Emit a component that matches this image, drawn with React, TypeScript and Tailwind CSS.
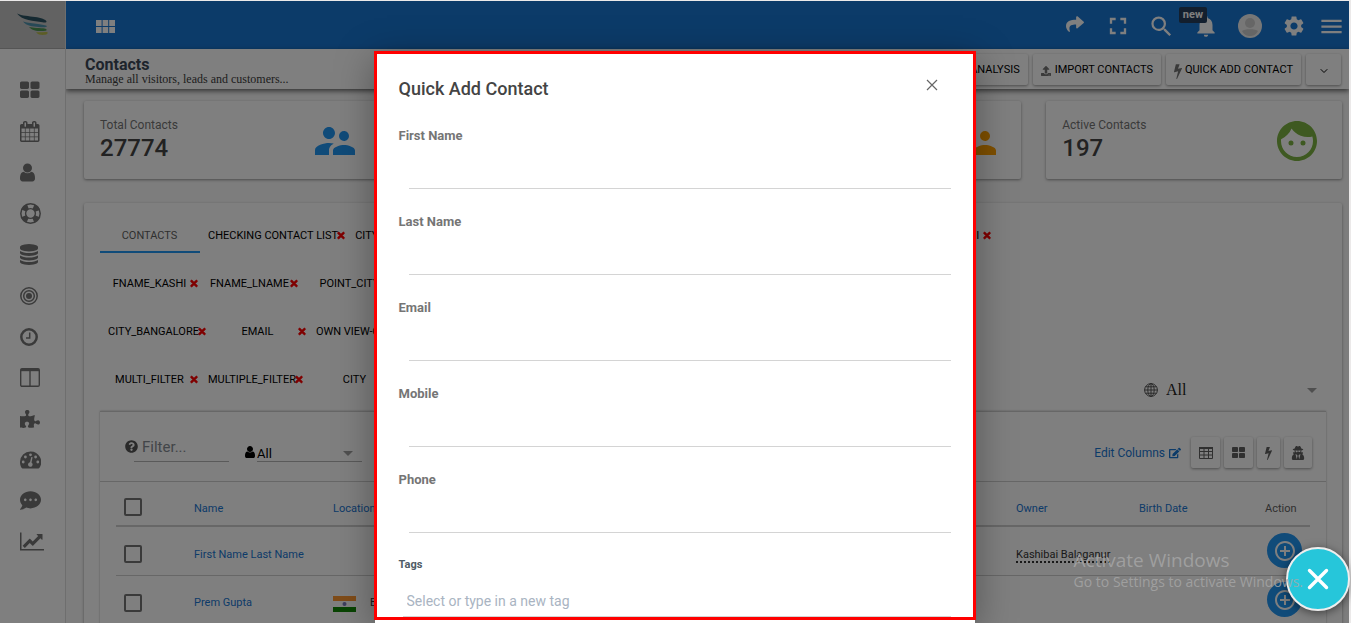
import * as React from 'react'
import {
  FaCommentDots,
  FaEdit,
  FaPuzzlePiece,
  FaQuestionCircle,
  FaShare,
  FaTimes,
  FaUpload,
  FaUserSecret,
} from 'react-icons/fa'
import {
  MdAddCircleOutline,
  MdArrowDropDown,
  MdFace,
  MdFullscreen,
  MdMenu,
  MdNotifications,
  MdSearch,
  MdSettings,
  MdSupervisorAccount,
} from 'react-icons/md'
import { ChevronDown } from 'lucide-react'
import { clsx } from 'clsx'

/* ---------- icons ---------- */

const GLYPHS = {
  thLarge: {
    box: '64 0 1664 1792',
    d: 'M832 1024v384q0 52-38 90t-90 38h-512q-52 0-90-38t-38-90v-384q0-52 38-90t90-38h512q52 0 90 38t38 90zm0-768v384q0 52-38 90t-90 38h-512q-52 0-90-38t-38-90v-384q0-52 38-90t90-38h512q52 0 90 38t38 90zm896 768v384q0 52-38 90t-90 38h-512q-52 0-90-38t-38-90v-384q0-52 38-90t90-38h512q52 0 90 38t38 90zm0-768v384q0 52-38 90t-90 38h-512q-52 0-90-38t-38-90v-384q0-52 38-90t90-38h512q52 0 90 38t38 90z',
  },
  calendar: {
    box: '64 0 1664 1792',
    d: 'M192 1664h288v-288h-288v288zm352 0h320v-288h-320v288zm-352-352h288v-320h-288v320zm352 0h320v-320h-320v320zm-352-384h288v-288h-288v288zm736 736h320v-288h-320v288zm-384-736h320v-288h-320v288zm768 736h288v-288h-288v288zm-384-352h320v-320h-320v320zm-352-864v-288q0-13-9.5-22.5t-22.5-9.5h-64q-13 0-22.5 9.5t-9.5 22.5v288q0 13 9.5 22.5t22.5 9.5h64q13 0 22.5-9.5t9.5-22.5zm736 864h288v-320h-288v320zm-384-384h320v-288h-320v288zm384 0h288v-288h-288v288zm32-480v-288q0-13-9.5-22.5t-22.5-9.5h-64q-13 0-22.5 9.5t-9.5 22.5v288q0 13 9.5 22.5t22.5 9.5h64q13 0 22.5-9.5t9.5-22.5zm384-64v1280q0 52-38 90t-90 38h-1408q-52 0-90-38t-38-90v-1280q0-52 38-90t90-38h128v-96q0-66 47-113t113-47h64q66 0 113 47t47 113v96h384v-96q0-66 47-113t113-47h64q66 0 113 47t47 113v96h128q52 0 90 38t38 90z',
  },
  user: {
    box: '256 0 1280 1792',
    d: 'M1536 1399q0 109-62.5 187t-150.5 78h-854q-88 0-150.5-78t-62.5-187q0-85 8.5-160.5t31.5-152 58.5-131 94-89 134.5-34.500q131 128 313 128t313-128q76 0 134.5 34.5t94 89 58.5 131 31.5 152 8.5 160.5zm-256-887q0 159-112.5 271.5t-271.5 112.5-271.5-112.5-112.5-271.5 112.5-271.5 271.5-112.5 271.5 112.5 112.5 271.5z',
  },
  database: {
    box: '128 0 1536 1792',
    d: 'M896 768q237 0 443-43t325-127v170q0 69-103 128t-280 93.5-385 34.5-385-34.5-280-93.5-103-128v-170q119 84 325 127t443 43zm0 768q237 0 443-43t325-127v170q0 69-103 128t-280 93.5-385 34.5-385-34.5-280-93.5-103-128v-170q119 84 325 127t443 43zm0-384q237 0 443-43t325-127v170q0 69-103 128t-280 93.5-385 34.5-385-34.5-280-93.5-103-128v-170q119 84 325 127t443 43zm0-1152q208 0 385 34.5t280 93.5 103 128v128q0 69-103 128t-280 93.5-385 34.5-385-34.5-280-93.5-103-128v-128q0-69 103-128t280-93.5 385-34.5z',
  },
  chart: {
    box: '0 0 2048 1792',
    d: 'M2048 1536v128h-2048v-1536h128v1408h1920zm-128-1248v435q0 21-19.5 29.5t-35.5-7.5l-121-121-633 633q-10 10-23 10t-23-10l-233-233-416 416-192-192 585-585q10-10 23-10t23 10l233 233 464-464-121-121q-16-16-7.5-35.5t29.5-19.5h435q14 0 23 9.5t9 23.5z',
  },
  bolt: {
    box: '448 0 896 1792',
    d: 'M1333 566q18 20 7 44l-540 1157q-13 25-42 25-4 0-14-2-17-5-25.5-19t-4.5-30l197-808-406 101q-4 1-12 1-18 0-31-11-18-15-13-39l201-825q4-14 16-23t28-9h328q19 0 32 12.5t13 29.5q0 8-5 18l-171 463 396-98q8-2 12-2 19 0 34 15z',
  },
}

const Glyph: React.FC<{ name: keyof typeof GLYPHS; className?: string }> = ({
  name,
  className = 'h-[21px]',
}) => (
  <svg
    viewBox={GLYPHS[name].box}
    fill="currentColor"
    aria-hidden="true"
    className={clsx('w-auto shrink-0', className)}
  >
    <path d={GLYPHS[name].d} />
  </svg>
)

const LifeRing = () => (
  <svg viewBox="0 0 21 21" fill="none" stroke="currentColor" className="size-[21px]">
    <circle cx="10.5" cy="10.5" r="9.7" strokeWidth="1.5" />
    <circle cx="10.5" cy="10.5" r="4.9" strokeWidth="1.4" />
    <circle
      cx="10.5"
      cy="10.5"
      r="7.4"
      strokeWidth="5.4"
      strokeDasharray="5.8 5.824"
      transform="rotate(22.5 10.5 10.5)"
    />
  </svg>
)

const Bullseye = () => (
  <svg viewBox="0 0 18 18" fill="none" stroke="currentColor" strokeWidth="1.5" className="size-[18px]">
    <circle cx="9" cy="9" r="8.2" />
    <circle cx="9" cy="9" r="5.3" />
    <circle cx="9" cy="9" r="3" fill="currentColor" stroke="none" />
  </svg>
)

const Clock = () => (
  <svg viewBox="0 0 18 18" fill="none" stroke="currentColor" className="size-[18px]">
    <circle cx="9" cy="9" r="7.7" strokeWidth="2.5" />
    <path d="M9.7 4.5v5.500H6" strokeWidth="1.5" />
  </svg>
)

const Columns = () => (
  <svg viewBox="0 0 20 19" fill="none" stroke="currentColor" className="h-[19px] w-5">
    <rect x=".7" y=".7" width="18.6" height="17.6" rx="1.3" strokeWidth="1.4" />
    <path d="M1 2h18" strokeWidth="2.4" />
    <path d="M10 2v16" strokeWidth="1.4" />
  </svg>
)

const Gauge = () => (
  <svg viewBox="0 0 21 18" className="h-[18px] w-[21px]">
    <path
      d="M10.5.5A10.5 10.5 0 0 0 0 11c0 2.3.6 4.3 1.7 6 .2.3.5.5.8.5h16c.3 0 .6-.2.8-.5A10.5 10.5 0 0 0 10.5.5z"
      fill="currentColor"
    />
    <g className="fill-white">
      <circle cx="3.2" cy="11" r="1.4" />
      <circle cx="5.4" cy="6" r="1.4" />
      <circle cx="10.5" cy="3.8" r="1.4" />
      <circle cx="15.6" cy="6" r="1.4" />
      <circle cx="17.8" cy="11" r="1.4" />
      <path d="M11.3 5.9l1.3.3-1.1 5.3a2.3 2.3 0 1 1-1.5-.3z" />
    </g>
  </svg>
)

const Globe = () => (
  <svg viewBox="0 0 14 14" fill="none" stroke="currentColor" className="size-[14px]">
    <circle cx="7" cy="7" r="6.4" />
    <ellipse cx="7" cy="7" rx="3.2" ry="6.4" />
    <path d="M7 .5v13M.5 7h13M1.500 3.800h11M1.500 10.200h11" />
  </svg>
)

const TableGrid = () => (
  <svg viewBox="0 0 14 12" fill="none" stroke="currentColor" className="h-3 w-[14px]">
    <path d="M.5 1h13v10.500H.5zM.5 4.500h13M.5 8h13M5 1v10.500M9.500 1v10.500" />
    <path d="M0 1h14" strokeWidth="2" />
  </svg>
)

const ModuleGrid = () => (
  <svg viewBox="0 0 19 13" fill="currentColor" className="h-[13px] w-[19px]">
    <path d="M0 0h5.600v6H0zM6.600 0h5.600v6H6.600zM13.200 0H19v6h-5.800zM0 7h5.600v6H0zM6.600 7h5.600v6H6.600zM13.200 7H19v6h-5.800z" />
  </svg>
)

const Logo = () => (
  <svg viewBox="0 0 32 24" className="h-6 w-8">
    <path d="M0 .5c5 2.500 12 2.500 18 3.500 6 .8 11 2.500 11.500 4.500.2 1-1.500 1.200-4 .8C17 8 5 7.500 0 .5z" fill="#2b5363" />
    <path d="M6 8.500c5 1.800 10 1.500 15 2.500 4 .8 8 1 9 2.300-1 1.400-5 1-8.500.7-6-.6-12-1-15.500-5.500z" fill="#4f93ad" />
    <path d="M12 14c4 1.200 11 .6 16.500 1.700 1.500.4 1.500 1.800 0 2.100-5 .6-13 .6-16.500-3.800z" fill="#4d9652" />
    <path d="M19 19.200c3 .5 8-.4 11.500 0 .8.9-.5 2.300-2.500 2.600-3.500.3-7 0-9-2.600z" fill="#b8bb4c" />
  </svg>
)

/* ---------- data ---------- */

const NAV_ITEMS = [
  { label: 'Dashboard', icon: <Glyph name="thLarge" /> },
  { label: 'Calendar', icon: <Glyph name="calendar" /> },
  { label: 'Contacts', icon: <Glyph name="user" /> },
  { label: 'Support', icon: <LifeRing /> },
  { label: 'Database', icon: <Glyph name="database" /> },
  { label: 'Goals', icon: <Bullseye /> },
  { label: 'History', icon: <Clock /> },
  { label: 'Boards', icon: <Columns /> },
  { label: 'Plugins', icon: <FaPuzzlePiece className="size-5" /> },
  { label: 'Performance', icon: <Gauge /> },
  { label: 'Chat', icon: <FaCommentDots className="size-[21px]" /> },
  { label: 'Reports', icon: <Glyph name="chart" /> },
]

const STATS = [
  { id: 'total', label: 'Total Contacts', value: '27774', icon: MdSupervisorAccount, color: 'text-[#2196f3]' },
  { id: 'customers', icon: MdSupervisorAccount, color: 'text-[#2196f3]' },
  { id: 'leads', icon: MdSupervisorAccount, color: 'text-[#ffa000]' },
  { id: 'active', label: 'Active Contacts', value: '197', icon: MdFace, color: 'text-[#7cb342]' },
]

interface ViewTab {
  label: string
  grow?: boolean
}

const TAB_ROWS: ViewTab[][] = [
  [
    { label: 'CONTACTS' },
    { label: 'CHECKING CONTACT LIST' },
    { label: 'CITY', grow: true },
    { label: 'LNAME_KASHI' },
  ],
  [{ label: 'FNAME_KASHI' }, { label: 'FNAME_LNAME' }, { label: 'POINT_CITY' }],
  [{ label: 'CITY_BANGALORE' }, { label: 'EMAIL' }, { label: 'OWN VIEW-CONTACT' }],
  [{ label: 'MULTI_FILTER' }, { label: 'MULTIPLE_FILTER' }, { label: 'CITY' }],
]

const ROWS = [
  { name: 'First Name Last Name', location: '', owner: 'Kashibai Balaganur' },
  { name: 'Prem Gupta', location: 'Bangalore', owner: '' },
]

const FIELDS = ['First Name', 'Last Name', 'Email', 'Mobile', 'Phone']

const RAISED = 'rounded-xs bg-white shadow-[0_1px_3px_rgba(0,0,0,0.4)]'

/* ---------- sections ---------- */

const Sidebar = () => (
  <aside className="relative z-10 w-[66px] shrink-0 border-r border-[#dcdcdc] bg-white">
    <a
      href="#home"
      aria-label="Home"
      className="flex h-12 items-center border-b border-[#aaaaaa] bg-[#c4c4c4] pl-[17px]"
    >
      <Logo />
    </a>
    <nav className="pt-[21px] text-[#757575]">
      {NAV_ITEMS.map(({ label, icon }) => (
        <a
          key={label}
          href={`#${label.toLowerCase()}`}
          aria-label={label}
          className="flex h-[41px] items-center pl-5"
        >
          {icon}
        </a>
      ))}
    </nav>
  </aside>
)

const TopBar = () => (
  <header className="flex h-12 shrink-0 items-center bg-[#1976d2] pt-0.5 pr-1 text-white">
    <button aria-label="Modules" className="ml-[30px]">
      <ModuleGrid />
    </button>
    <div className="ml-auto flex items-center">
      <button aria-label="Share" className="mr-5 pb-1">
        <FaShare className="size-[18px]" />
      </button>
      <button aria-label="Full screen" className="mr-4">
        <MdFullscreen className="size-7" />
      </button>
      <button aria-label="Search" className="mr-[18px]">
        <MdSearch className="size-[27px]" />
      </button>
      <button aria-label="Notifications" className="relative mr-[19px]">
        <MdNotifications className="size-[26px]" />
        <span className="absolute -top-1.5 right-3 rounded-xs bg-[#263f5c] px-1 text-[11px] leading-4 font-bold text-white">
          new
        </span>
      </button>
      <button
        aria-label="Account"
        className="mr-5 flex size-6 items-center justify-center rounded-full bg-[#efefef]"
      >
        <svg viewBox="0 0 24 24" className="size-6 fill-[#cccccc]">
          <circle cx="12" cy="9" r="5" />
          <path d="M4 17c2-2.500 14-2.500 16 0-2 4-5 5-8 5s-6-1-8-5z" />
        </svg>
      </button>
      <button aria-label="Settings" className="mr-3">
        <MdSettings className="size-6" />
      </button>
      <button aria-label="Menu">
        <MdMenu className="size-[27px]" />
      </button>
    </div>
  </header>
)

const PageHeader = () => (
  <div className="relative flex h-10 shrink-0 items-center justify-between bg-white pr-2 pl-[19px] shadow-[0_2px_5px_rgba(0,0,0,0.6)]">
    <div className="pt-1">
      <h1 className="text-base leading-4 font-bold text-[#3c4858]">Contacts</h1>
      <p className="font-['Liberation_Serif',serif] text-xs leading-3 text-[#3c3c3c]">
        Manage all visitors, leads and customers...
      </p>
    </div>
    <div className="flex h-[31px] gap-[5px] text-[11px] text-black">
      <button className={clsx(RAISED, 'px-2 pt-[3px]')}>CONTACT ANALYSIS</button>
      <button className={clsx(RAISED, 'flex items-center gap-1 px-2 pt-[3px]')}>
        <FaUpload className="size-[10px] text-[#757575]" />
        IMPORT CONTACTS
      </button>
      <button className={clsx(RAISED, 'flex items-center gap-[3px] px-2 pt-[3px]')}>
        <Glyph name="bolt" className="h-4 text-[#757575]" />
        QUICK ADD CONTACT
      </button>
      <button aria-label="More" className={clsx(RAISED, 'flex w-[35px] items-center justify-center pt-[3px]')}>
        <ChevronDown className="size-3" />
      </button>
    </div>
  </div>
)

const ViewTabs = () => (
  <div className="flex flex-1 flex-col gap-3 text-[11px] text-black">
    {TAB_ROWS.map((row, i) => (
      <div key={i} className="flex h-9 max-w-[893px]">
        {row.map(({ label, grow }) => (
          <div key={label} className={clsx('relative flex', grow && 'grow')}>
            <button
              className={clsx(
                'min-w-[100px] pr-[9px] pl-2',
                label === 'CONTACTS' ? 'border-b-2 border-[#2196f3] pt-1 text-[#5f5f5f]' : 'pt-0.5',
                grow && 'text-left'
              )}
            >
              {label}
            </button>
            {label !== 'CONTACTS' && (
              <button
                aria-label={`Remove ${label}`}
                className="absolute top-1/2 right-px -translate-y-1/2 pt-px text-[#ff0000]"
              >
                <FaTimes className="size-[10px]" strokeWidth={40} stroke="currentColor" />
              </button>
            )}
          </div>
        ))}
      </div>
    ))}
  </div>
)

const Flag = () => (
  <svg viewBox="0 0 23 16" className="h-4 w-[23px]">
    <path fill="#ff9933" d="M0 0h23v5H0z" />
    <path fill="#ffffff" d="M0 5h23v6H0z" />
    <path fill="#128807" d="M0 11h23v5H0z" />
    <circle cx="11.5" cy="8" r="2" fill="#7a7ab8" />
  </svg>
)

const CheckBox = ({ label }: { label: string }) => (
  <input
    type="checkbox"
    aria-label={label}
    className="block size-[18px] appearance-none rounded-xs border-2 border-[#757575]"
  />
)

const ContactsTable = () => (
  <table className="mx-4 w-[calc(100%-32px)] table-fixed text-left text-[11px] text-[#1976d2]">
    <colgroup>
      <col className="w-[78px]" />
      <col className="w-[139px]" />
      <col />
      <col className="w-[123px]" />
      <col className="w-[126px]" />
      <col className="w-[45px]" />
    </colgroup>
    <thead>
      <tr className="h-11 border-b-2 border-[#cfcfcf]">
        <th className="pt-1.5 pl-2">
          <CheckBox label="Select all" />
        </th>
        <th className="pt-[11px] font-normal">Name</th>
        <th className="pt-[11px] font-normal">Location</th>
        <th className="pt-[11px] font-normal">Owner</th>
        <th className="pt-[11px] font-normal">Birth Date</th>
        <th className="pt-[11px] font-normal text-[#616161]">Action</th>
      </tr>
    </thead>
    <tbody>
      {ROWS.map(({ name, location, owner }) => (
        <tr key={name} className="h-[49px] border-b border-[#cfcfcf]">
          <td className="pt-1.5 pl-2">
            <CheckBox label={`Select ${name}`} />
          </td>
          <td className="pt-2">
            <a href="#contact">{name}</a>
          </td>
          <td className="pt-2 text-[#333333]">
            {location && (
              <span className="flex items-center gap-[14px]">
                <Flag />
                {location}
              </span>
            )}
          </td>
          <td className="pt-2 text-[#333333]">
            {owner && <span className="border-b-2 border-dotted border-[#333333]">{owner}</span>}
          </td>
          <td />
          <td>
            <button
              aria-label={`Actions for ${name}`}
              className="ml-0.5 flex size-[35px] items-center justify-center rounded-full bg-[#2196f3] text-white"
            >
              <MdAddCircleOutline className="size-6" />
            </button>
          </td>
        </tr>
      ))}
    </tbody>
  </table>
)

const Toolbar = () => (
  <div className="flex h-[70px] items-center border-b border-[#cfcfcf] pr-[14px] pl-[25px]">
    <FaQuestionCircle className="size-[13px] text-[#555555]" />
    <input
      aria-label="Filter"
      placeholder="Filter..."
      className="-ml-1 h-[31px] w-[95px] border-b border-[#b5b5b5] pt-0.5 pl-2 text-[15px] outline-none placeholder:text-[#858b92]"
    />
    <Glyph name="user" className="mt-[11px] ml-4 h-[14px] text-black" />
    <div className="relative ml-0.5 flex h-[31px] w-[105px] items-center border-b border-[#b5b5b5]">
      <select
        aria-label="Owner filter"
        className="w-full appearance-none pt-4 text-[13px] leading-5 text-black outline-none"
      >
        <option>All</option>
      </select>
      <MdArrowDropDown className="pointer-events-none absolute right-0.5 -bottom-1 size-6 text-[#9e9e9e]" />
    </div>
    <a href="#columns" className="mt-3 ml-auto flex items-center gap-1 text-xs text-[#1976d2]">
      Edit Columns <FaEdit className="size-3" />
    </a>
    <div className="mt-3 ml-[10px] flex h-[31px] gap-1 text-[#616161]">
      <button aria-label="Table view" className={clsx(RAISED, 'flex w-[29px] items-center justify-center')}>
        <TableGrid />
      </button>
      <button aria-label="Card view" className={clsx(RAISED, 'flex w-[29px] items-center justify-center')}>
        <Glyph name="thLarge" className="h-[14px]" />
      </button>
      <button aria-label="Automations" className={clsx(RAISED, 'flex w-[23px] items-center justify-center')}>
        <Glyph name="bolt" className="h-[14px]" />
      </button>
      <button aria-label="Private" className={clsx(RAISED, 'flex w-7 items-center justify-center')}>
        <FaUserSecret className="size-[14px]" />
      </button>
    </div>
  </div>
)

const ContactsPanel = () => (
  <section className="mt-6 flex-1 rounded-xs bg-white px-4 pt-[14px] shadow-[0_1px_3px_rgba(0,0,0,0.4)]">
    <div className="flex items-end">
      <ViewTabs />
      <div className="relative -mb-[7px] flex w-[182px] items-center gap-2 pr-1 text-[#555555]">
        <Globe />
        <select
          aria-label="View"
          className="flex-1 appearance-none font-['Liberation_Serif',serif] text-base leading-7 text-[#222222] outline-none"
        >
          <option>All</option>
        </select>
        <MdArrowDropDown className="pointer-events-none absolute right-0.5 size-6 text-[#9e9e9e]" />
      </div>
    </div>
    <div className="mt-[14px] border-y border-[#cfcfcf] shadow-[0_0_2px_rgba(0,0,0,0.3)]">
      <Toolbar />
      <ContactsTable />
    </div>
  </section>
)

const QuickAddDialog = () => (
  <div
    role="dialog"
    aria-labelledby="quick-add-title"
    className="absolute top-[50px] bottom-0 left-1/2 z-20 flex w-[602px] -translate-x-1/2 flex-col bg-white bg-clip-content px-px shadow-[0_8px_36px_rgba(0,0,0,0.35)]"
  >
    <div className="-mx-px mb-[3px] flex-1 overflow-hidden border-[3px] border-[#ff0000] bg-white px-[22px] pt-[21px]">
      <div className="mb-[23px] flex items-start justify-between">
        <h2 id="quick-add-title" className="text-lg leading-7 font-medium text-[#444444]">
          Quick Add Contact
        </h2>
        <button aria-label="Close" className="mt-[3px] mr-3">
          <svg viewBox="0 0 14 14" className="size-[14px] stroke-[#666666]">
            <path d="M2 2l10 10M12 2L2 12" strokeWidth="1.2" />
          </svg>
        </button>
      </div>
      <form>
        {FIELDS.map((field) => (
          <label key={field} className="mb-[23px] block text-[13px] leading-5 font-bold text-[#757575]">
            {field}
            <span className="block pl-[10px]">
              <input
                type="text"
                className="block h-[43px] w-full border-b border-[#d4d4d4] font-normal outline-none"
              />
            </span>
          </label>
        ))}
        <label className="block text-[11px] leading-[18px] font-bold text-[#4f5b66]">
          Tags
          <span className="mt-[11px] block pl-1">
            <input
              type="text"
              placeholder="Select or type in a new tag"
              className="block h-8 w-full border-b border-[#d4d4d4] px-1 text-sm font-normal outline-none placeholder:text-[#a9b4c2]"
            />
          </span>
        </label>
      </form>
    </div>
  </div>
)

export default function App() {
  return (
    <div className="relative h-screen overflow-hidden bg-[#ebe9e9] pt-px pr-0.5 font-[Roboto,sans-serif]">
      <div className="relative flex h-full overflow-hidden bg-[#fafafa]">
        <Sidebar />
        <div className="flex min-w-0 flex-1 flex-col">
          <TopBar />
          <PageHeader />
          <main className="flex flex-1 flex-col pt-3 pr-[7px] pl-[18px]">
            <div className="grid grid-cols-4 gap-[25px]">
              {STATS.map(({ id, label, value, icon: Icon, color }) => (
                <div key={id} className={clsx(RAISED, 'flex h-[78px] items-center pr-[21px] pl-4')}>
                  <div>
                    <div className="text-xs leading-4 text-[#757575]">{label}</div>
                    <div className="text-2xl leading-[30px] font-medium text-[#444444]">{value}</div>
                  </div>
                  <Icon className={clsx('mt-0.5 ml-auto size-12', color)} />
                </div>
              ))}
            </div>
            <ContactsPanel />
          </main>
        </div>
        <div className="absolute inset-0 z-20 bg-black/50" />
        <QuickAddDialog />
      </div>

      <button
        aria-label="Close quick actions"
        className="absolute right-px bottom-3 z-20 flex size-16 items-center justify-center rounded-full border-2 border-[#eeeeee] bg-[#26c6da] shadow-[0_2px_10px_rgba(0,0,0,0.5)]"
      >
        <svg viewBox="0 0 22 22" className="size-[22px] stroke-white">
          <path d="M2.5 2.5l17 17M19.5 2.5l-17 17" strokeWidth="3.4" strokeLinecap="round" />
        </svg>
      </button>

      <div className="pointer-events-none absolute right-12 bottom-[31px] z-20 font-['Open_Sans',sans-serif] text-[#a8a8a8]/80">
        <div className="text-[19px] leading-6">Activate Windows</div>
        <div className="text-sm leading-5">Go to Settings to activate Windows.</div>
      </div>
    </div>
  )
}
